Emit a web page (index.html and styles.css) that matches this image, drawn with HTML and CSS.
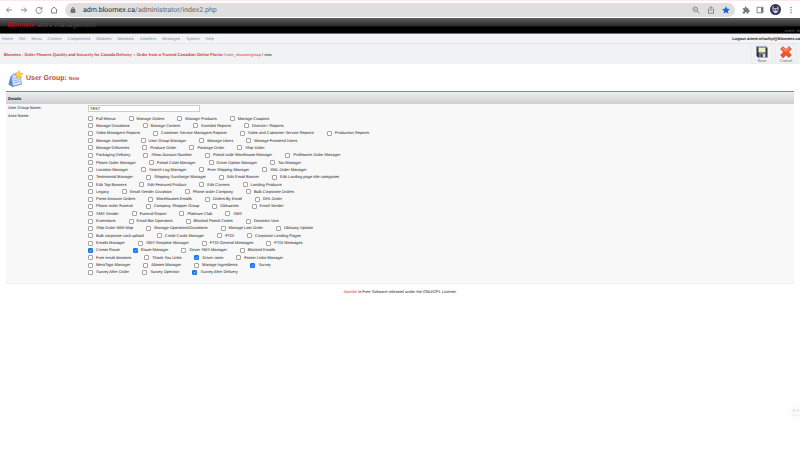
FILE: index.html
```html
<!DOCTYPE html>
<html lang="en">
<head>
  <meta charset="UTF-8" />
  <meta name="viewport" content="width=device-width, initial-scale=1" />
  <title>Bloomex - Administration</title>
  <link rel="stylesheet" href="styles.css">
</head>
<body>
  <div class="browser-bar">
    <div class="nav-buttons">
      <button type="button" aria-label="Back"><svg viewBox="0 0 16 16"><path d="M14 8H3M8 3L3 8l5 5" /></svg></button>
      <button type="button" aria-label="Forward"><svg viewBox="0 0 16 16"><path d="M2 8h11M8 3l5 5-5 5" /></svg></button>
      <button type="button" aria-label="Reload"><svg viewBox="0 0 16 16"><path d="M13 5.500A6 6 0 1 0 14 9M14 1.500V6H9.500" /></svg></button>
      <button type="button" aria-label="Home"><svg viewBox="0 0 16 16"><path d="M3 7v7h10V7M1.500 8L8 2l6.500 6" /></svg></button>
    </div>
    <div class="address">
      <svg class="lock" viewBox="0 0 16 16"><path class="fill" d="M3 7h10v8H3z" /><path d="M5 7V4.500a3 3 0 0 1 6 0V7" /></svg>
      <span class="url"><span class="host">adm.bloomex.ca</span>/administrator/index2.php</span>
      <button type="button" aria-label="Zoom"><svg viewBox="0 0 16 16"><circle cx="6.500" cy="6.500" r="4.500" /><path d="M10 10l5 5M4.500 6.500h4" /></svg></button>
      <button type="button" aria-label="Share"><svg viewBox="0 0 16 16"><path d="M5 6H3v8.500h10V6h-2M8 10V1.500M5 4l3-3 3 3" /></svg></button>
      <button type="button" aria-label="Bookmark" class="starred"><svg viewBox="0 0 16 16"><path d="M8 0.500l2.300 5 5.500.6-4.100 3.700 1.200 5.400L8 12.500l-4.900 2.700 1.200-5.400L.2 6.100l5.500-.6z" /></svg></button>
    </div>
    <div class="tools">
      <button type="button" aria-label="Extensions"><svg viewBox="0 0 16 16"><path class="fill" d="M1.500 4.500h4V3a1.800 1.800 0 0 1 3.600 0v1.500h3.900v3.500h1a1.800 1.800 0 0 1 0 3.600h-1v3.400H9.300v-1a1.800 1.800 0 0 0-3.600 0v1H1.500v-4h1a1.700 1.700 0 0 0 0-3.400h-1z" /></svg></button>
      <button type="button" aria-label="Side panel"><svg viewBox="0 0 16 16"><path d="M2 2.500h12v11H2z" /><path class="fill" d="M10 3h4v10h-4z" /></svg></button>
      <button type="button" aria-label="Profile" class="avatar"><svg viewBox="0 0 22 22"><circle cx="11" cy="11" r="11" fill="#30334f" /><path d="M4 7l3-3 1 4h6l1-4 3 3-2 9-5 3-5-3z" fill="#9fb3cc" /><path d="M7 10h3v3H7zM12 10h3v3h-3z" fill="#3c486e" /><path d="M8 15h6v2H8z" fill="#e9edf2" /><path d="M4 4l3 1-3 4zM18 4l-3 1 3 4z" fill="#a84a5b" /></svg></button>
      <button type="button" aria-label="More"><svg viewBox="0 0 16 16"><circle class="fill" cx="8" cy="3" r="1.500" /><circle class="fill" cx="8" cy="8" r="1.500" /><circle class="fill" cx="8" cy="13" r="1.500" /></svg></button>
    </div>
  </div>

  <header class="site-header">
    <div class="brand"><strong>Bloomex</strong> <span>store management</span></div>
    <div class="version">artem .le</div>
  </header>

  <div class="menu-bar">
    <nav>
      <a href="#">Home</a>
      <a href="#">Site</a>
      <a href="#">Menu</a>
      <a href="#">Content</a>
      <a href="#">Components</a>
      <a href="#">Modules</a>
      <a href="#">Mambots</a>
      <a href="#">Installers</a>
      <a href="#">Messages</a>
      <a href="#">System</a>
      <a href="#">Help</a>
    </nav>
    <a class="logout" href="#">Logout artem.teluchyi@bloomex.ca</a>
  </div>

  <div class="toolbar">
    <div class="breadcrumb">
      <a class="root" href="#">Bloomex - Order Flowers Quickly and Securely for Canada Delivery :: Order from a Trusted Canadian Online Florist</a> / <a href="#">com_newusergroup</a> / new
    </div>
    <div class="actions">
      <button type="submit" form="groupForm">
        <svg viewBox="0 0 24 24">
          <path d="M1 1h19l3 3v19H4l-3-3z" fill="#34344f" />
          <path d="M5 1h14v12H5z" fill="#eef0bd" />
          <path d="M5 1h14v3H5z" fill="#9297b2" />
          <path d="M7 15h12v8H7z" fill="#cfd3de" />
          <path d="M9 16h4v6H9z" fill="#292940" />
        </svg>
        Save
      </button>
      <button type="button">
        <svg viewBox="0 0 24 24">
          <path d="M6 1l6 6 6-6 5 5-6 6 6 6-5 5-6-5-6 6-5-6 6-6-6-6z" fill="#f2542b" stroke="#d63c20" />
          <path d="M6 3l6 6 6-6 2 2-8 7-8-6z" fill="#ff9270" />
        </svg>
        Cancel
      </button>
    </div>
  </div>

  <main>
    <div class="page-title">
      <svg viewBox="0 0 30 36">
        <path d="M5 13l18-3 5 19-19 5-8-5z" fill="#5d86d8" />
        <path d="M7 13l16-4 4 19-17 4z" fill="#dce9fd" stroke="#7399df" />
        <path d="M10 18l12-3M11 22l12-3M12 26l12-3" stroke="#7ba0e0" stroke-width="1.500" />
        <path d="M8 15c-1-7 5-9 8-5" fill="none" stroke="#6287cf" stroke-width="2" />
        <path d="M22 1l2 5 6 1-4 4 1 6-5-3-6 2 2-6-4-4 6-1z" fill="#ffd33a" stroke="#e0a326" />
      </svg>
      <h1>User Group: <small>New</small></h1>
    </div>

    <form id="groupForm" class="group-form">
      <h2>Details</h2>
      <div class="field">
        <label for="groupName">User Group Name:</label>
        <input type="text" id="groupName" name="name" value="TEST" />
      </div>
      <div class="field">
        <span id="areaLabel">Area Name:</span>
        <div class="areas" role="group" aria-labelledby="areaLabel">
          <div class="area-row">
            <label><input type="checkbox" name="area" />Full Menus</label>
            <label><input type="checkbox" name="area" />Manage Orders</label>
            <label><input type="checkbox" name="area" />Manage Products</label>
            <label><input type="checkbox" name="area" />Manage Coupons</label>
          </div>
          <div class="area-row">
            <label><input type="checkbox" name="area" />Manage Donations</label>
            <label><input type="checkbox" name="area" />Manage Content</label>
            <label><input type="checkbox" name="area" />Exteded Reports</label>
            <label><input type="checkbox" name="area" />Director+ Reports</label>
          </div>
          <div class="area-row">
            <label><input type="checkbox" name="area" />Sales Managers Reports</label>
            <label><input type="checkbox" name="area" />Customer Service Managers Reports</label>
            <label><input type="checkbox" name="area" />Sales and Customer Service Reports</label>
            <label><input type="checkbox" name="area" />Production Reports</label>
          </div>
          <div class="area-row">
            <label><input type="checkbox" name="area" />Manage Joomfish</label>
            <label><input type="checkbox" name="area" />User Group Manager</label>
            <label><input type="checkbox" name="area" />Manage Users</label>
            <label><input type="checkbox" name="area" />Manage Frontend Users</label>
          </div>
          <div class="area-row">
            <label><input type="checkbox" name="area" />Manage Deliveries</label>
            <label><input type="checkbox" name="area" />Produce Order</label>
            <label><input type="checkbox" name="area" />Package Order</label>
            <label><input type="checkbox" name="area" />Ship Order</label>
          </div>
          <div class="area-row">
            <label><input type="checkbox" name="area" />Packaging Delivery</label>
            <label><input type="checkbox" name="area" />Show Account Number</label>
            <label><input type="checkbox" name="area" />Postal code Warehouse Manager</label>
            <label><input type="checkbox" name="area" />Proflowers Order Manager</label>
          </div>
          <div class="area-row">
            <label><input type="checkbox" name="area" />Phone Order Manager</label>
            <label><input type="checkbox" name="area" />Postal Code Manager</label>
            <label><input type="checkbox" name="area" />Driver Option Manager</label>
            <label><input type="checkbox" name="area" />Tax Manager</label>
          </div>
          <div class="area-row">
            <label><input type="checkbox" name="area" />Location Manager</label>
            <label><input type="checkbox" name="area" />Search Log Manager</label>
            <label><input type="checkbox" name="area" />Free Shipping Manager</label>
            <label><input type="checkbox" name="area" />XML Order Manager</label>
          </div>
          <div class="area-row">
            <label><input type="checkbox" name="area" />Testimonial Manager</label>
            <label><input type="checkbox" name="area" />Shipping Surcharge Manager</label>
            <label><input type="checkbox" name="area" />Edit Email Banner</label>
            <label><input type="checkbox" name="area" />Edit Landing page title categories</label>
          </div>
          <div class="area-row">
            <label><input type="checkbox" name="area" />Edit Top Banners</label>
            <label><input type="checkbox" name="area" />Edit Featured Product</label>
            <label><input type="checkbox" name="area" />Edit Corners</label>
            <label><input type="checkbox" name="area" />Landing Products</label>
          </div>
          <div class="area-row">
            <label><input type="checkbox" name="area" />Legacy</label>
            <label><input type="checkbox" name="area" />Email Sender Occasion</label>
            <label><input type="checkbox" name="area" />Phone order Company</label>
            <label><input type="checkbox" name="area" />Bulk Corporate Orders</label>
          </div>
          <div class="area-row">
            <label><input type="checkbox" name="area" />Parse Amazon Orders</label>
            <label><input type="checkbox" name="area" />Warehouses Emails</label>
            <label><input type="checkbox" name="area" />Orders By Email</label>
            <label><input type="checkbox" name="area" />DHL Order</label>
          </div>
          <div class="area-row">
            <label><input type="checkbox" name="area" />Phone order Funeral</label>
            <label><input type="checkbox" name="area" />Company Shopper Group</label>
            <label><input type="checkbox" name="area" />Obituaries</label>
            <label><input type="checkbox" name="area" />Email Sender</label>
          </div>
          <div class="area-row">
            <label><input type="checkbox" name="area" />SMS Sender</label>
            <label><input type="checkbox" name="area" />Funeral Report</label>
            <label><input type="checkbox" name="area" />Platinum Club</label>
            <label><input type="checkbox" name="area" />SMS</label>
          </div>
          <div class="area-row">
            <label><input type="checkbox" name="area" />Extensions</label>
            <label><input type="checkbox" name="area" />Email Bot Operators</label>
            <label><input type="checkbox" name="area" />Blocked Postal Codes</label>
            <label><input type="checkbox" name="area" />Donation Vars</label>
          </div>
          <div class="area-row">
            <label><input type="checkbox" name="area" />Ship Order With Map</label>
            <label><input type="checkbox" name="area" />Manage Operators/Occasions</label>
            <label><input type="checkbox" name="area" />Manage Last Order</label>
            <label><input type="checkbox" name="area" />Obituary Update</label>
          </div>
          <div class="area-row">
            <label><input type="checkbox" name="area" />Bulk corporate card upload</label>
            <label><input type="checkbox" name="area" />Credit Cards Manager</label>
            <label><input type="checkbox" name="area" />FTDI</label>
            <label><input type="checkbox" name="area" />Corporate Landing Pages</label>
          </div>
          <div class="area-row">
            <label><input type="checkbox" name="area" />Emails Manager</label>
            <label><input type="checkbox" name="area" />SMS Template Manager</label>
            <label><input type="checkbox" name="area" />FTDI General Messages</label>
            <label><input type="checkbox" name="area" />FTDI Messages</label>
          </div>
          <div class="area-row">
            <label><input type="checkbox" name="area" checked />Create Route</label>
            <label><input type="checkbox" name="area" checked />Route Manager</label>
            <label><input type="checkbox" name="area" />Driver SMS Manager</label>
            <label><input type="checkbox" name="area" />Blocked Emails</label>
          </div>
          <div class="area-row">
            <label><input type="checkbox" name="area" />Free email domains</label>
            <label><input type="checkbox" name="area" />Thank You Links</label>
            <label><input type="checkbox" name="area" checked />Driver rates</label>
            <label><input type="checkbox" name="area" />Footer Links Manager</label>
          </div>
          <div class="area-row">
            <label><input type="checkbox" name="area" />MetaTags Manager</label>
            <label><input type="checkbox" name="area" />Aliases Manager</label>
            <label><input type="checkbox" name="area" />Manage Ingredients</label>
            <label><input type="checkbox" name="area" checked />Survey</label>
          </div>
          <div class="area-row">
            <label><input type="checkbox" name="area" />Survey After Order</label>
            <label><input type="checkbox" name="area" />Survey Operator</label>
            <label><input type="checkbox" name="area" checked />Survey After Delivery</label>
          </div>
        </div>
      </div>
    </form>
  </main>

  <footer><a href="#">Joomla!</a> is Free Software released under the GNU/GPL License.</footer>

  <button type="button" class="translate" aria-label="Translate">
    <svg viewBox="0 0 16 16"><path d="M1 8l3-7 3 7M2 6h4M9 4h6M12 2v2M14 4l-4 5M10 5l4 4M1 14h14" /></svg>
  </button>
</body>
</html>
```

FILE: styles.css
```css
* {
  margin: 0;
  padding: 0;
  box-sizing: border-box;
}
body {
  font-family: "Liberation Sans", Arial, sans-serif;
  font-size: 4px;
  line-height: 5px;
  color: #222222;
  background: #ffffff;
  text-rendering: geometricPrecision;
}
a {
  color: inherit;
  text-decoration: none;
}
button {
  border: none;
  background: none;
  font: inherit;
  color: inherit;
  cursor: pointer;
}
svg {
  display: block;
}

/* browser bar */
.browser-bar {
  display: flex;
  align-items: center;
  height: 18px;
  padding: 0 5px;
  border-top: 1px solid #fbe9ee;
}
.browser-bar svg {
  width: 8px;
  height: 8px;
  fill: none;
  stroke: #85888c;
  stroke-width: 2;
}
.browser-bar .fill {
  fill: #75787c;
  stroke: none;
}
.nav-buttons {
  display: flex;
  gap: 7px;
}
.address {
  flex: 1;
  display: flex;
  align-items: center;
  gap: 7px;
  height: 14px;
  margin: 0 7px;
  padding: 0 5px;
  border-radius: 7px;
  background: #dfdfe0;
}
.address .lock {
  width: 6px;
  height: 6px;
}
.address .lock,
.address .lock .fill {
  stroke: #55585c;
}
.url {
  flex: 1;
  font-family: Roboto, sans-serif;
  font-size: 7px;
  line-height: 10px;
  color: #65676a;
}
.url .host {
  color: #252628;
}
.browser-bar .starred svg {
  fill: #1a66d2;
  stroke: none;
}
.tools {
  display: flex;
  align-items: center;
  gap: 6px;
}
.browser-bar .avatar svg {
  width: 11px;
  height: 11px;
  stroke: none;
}

/* site header */
.site-header {
  display: flex;
  justify-content: space-between;
  align-items: center;
  height: 16px;
  padding-left: 7px;
  background: linear-gradient(#606060, #2c2c2c 50%, #000000 60%);
  border-bottom: 1px solid #dc4038;
}
.brand {
  font-size: 7px;
  line-height: 8px;
  color: #4c4c4c;
}
.brand strong {
  margin-right: 1px;
  font-weight: normal;
  color: #c80d12;
}
.version {
  align-self: flex-end;
  color: #666666;
}
.menu-bar {
  display: flex;
  justify-content: space-between;
  align-items: center;
  height: 10px;
  padding-left: 2px;
  background: #f1f3f5;
  border-bottom: 1px solid #e5e7e9;
}
.menu-bar nav {
  display: flex;
  gap: 6px;
  color: #8c8c8c;
}
.logout {
  font-weight: bold;
}
.toolbar {
  display: flex;
  justify-content: space-between;
  align-items: center;
  height: 20px;
  padding: 0 3px 0 4px;
  background: #f0f2f4;
}
.breadcrumb a {
  color: #cc3c32;
}
.breadcrumb .root {
  font-weight: bold;
}
.actions {
  display: flex;
  gap: 2px;
}
.actions button {
  display: flex;
  flex-direction: column;
  align-items: center;
  width: 22px;
  border: 1px solid #e9ebee;
  color: #666666;
}
.actions svg {
  width: 12px;
  height: 12px;
}

/* page content */
main {
  padding: 0 6px;
}
.page-title {
  display: flex;
  align-items: center;
  gap: 3px;
  height: 27px;
  padding: 2px 2px 0;
}
.page-title svg {
  width: 15px;
  height: 18px;
}
.page-title h1 {
  font-size: 7px;
  line-height: 8px;
  color: #c64934;
}
.page-title small {
  font-size: 5px;
}
.group-form {
  padding-bottom: 7px;
  background: #f8f8f8;
  border-bottom: 1px solid #eeeeee;
}
.group-form h2 {
  height: 13px;
  padding: 4px 2px 0;
  font-size: 4px;
  line-height: 5px;
  color: #111111;
  background: linear-gradient(#eeeeee, #cfcfcf);
  border-top: 1px solid #dc6862;
}
.field {
  display: grid;
  grid-template-columns: 80px 1fr;
  padding-left: 2px;
  line-height: 8px;
}
.field input[type="text"] {
  width: 112px;
  height: 7px;
  margin-top: 1px;
  padding: 0 1px;
  border: 1px solid #cccccc;
  background: #ffffff;
  font: inherit;
  line-height: 5px;
  color: #222222;
}
.areas {
  display: grid;
  grid-auto-rows: 1fr;
  min-height: 161px;
  margin-top: 3px;
}
.area-row {
  display: flex;
  align-items: center;
  gap: 13px;
  line-height: 6px;
}
.area-row label {
  display: flex;
  align-items: center;
  gap: 3px;
}
.area-row input {
  appearance: none;
  display: grid;
  place-items: center;
  width: 5px;
  height: 5px;
  border: 1px solid #a2a2a2;
  border-radius: 1px;
  background: #ffffff;
}
.area-row input:checked {
  border-color: #1677ee;
  background: #1677ee;
}
.area-row input:checked::before {
  content: "✓";
  font-size: 4px;
  line-height: 4px;
  color: #ffffff;
}
footer {
  padding-top: 5px;
  text-align: center;
}
footer a {
  color: #e0342c;
}

/* floating translate button */
.translate {
  position: fixed;
  right: -5px;
  bottom: 42px;
  padding: 5px;
  border-radius: 9px;
  background: #fdfdfd;
}
.translate svg {
  width: 8px;
  height: 8px;
  fill: none;
  stroke: #d3d3d8;
}
```
